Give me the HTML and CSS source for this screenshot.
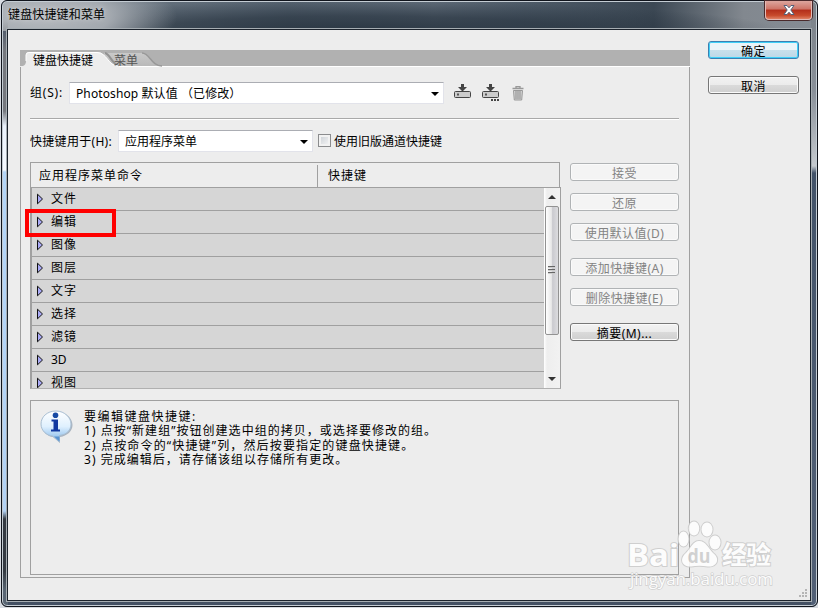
FILE: index.html
```html
<!DOCTYPE html>
<html lang="zh-CN">
<head>
<meta charset="utf-8">
<title>键盘快捷键和菜单</title>
<link rel="stylesheet" href="styles.css">
</head>
<body>
<div class="window">
  <header class="titlebar">
    <span class="title">键盘快捷键和菜单</span>
    <div class="close"><svg width="12" height="10" viewBox="0 0 12 10"><path d="M1 .5h3l2 2.300L8 .5h3L7.800 5 11 9.500H8L6 7.200 4 9.500H1L4.200 5z" fill="#fff" stroke="#53617a" stroke-width="1"/></svg></div>
  </header>
  <main class="client">
    <section class="panel">
      <div class="tabs">
        <svg class="tabshape" width="150" height="17" viewBox="0 0 150 17">
          <defs><linearGradient id="tg" x2="0" y2="1"><stop stop-color="#c9c9c9"/><stop offset="1" stop-color="#b9b9b9"/></linearGradient></defs>
          <path d="M84 3H122C130 3 131 16 142 16H84z" fill="url(#tg)"/>
          <path d="M122 3C130 3 131 16 142 16" fill="none" stroke="#989898" stroke-width="1.500"/>
          <path d="M85 3C90 4 92 14 99 16" fill="none" stroke="#929292" stroke-width="2"/>
          <path d="M0 16H3Q6 15 6 11V5Q6 2 9 2H77C87 2 88 16 99 16V17H0z" fill="#ededed"/>
          <path d="M6 11V5Q6 2.500 9 2.500H77C87 2.500 88 16 98 16" fill="none" stroke="#fff"/>
        </svg>
        <span class="tab active">键盘快捷键</span><span class="tab">菜单</span>
      </div>
      <div class="body">
        <div class="row set">
          <label>组(S):</label>
          <div class="combo wide"><span>Photoshop 默认值 （已修改）</span><i class="down"></i></div>
          <svg class="tool save" width="18" height="18" viewBox="0 0 18 18"><use href="#disk"/></svg>
          <svg class="tool saveas" width="18" height="18" viewBox="0 0 18 18"><g id="disk"><rect x=".5" y="7.500" width="16" height="6" rx="1" fill="#ccc" stroke="#444"/><path d="M3 9.500h2v2H3z" fill="#555"/><path d="M7 0h3v3h3L8.500 7.500 4 3h3z" fill="#444"/></g><path d="M9 15h2v2H9zM12 15h2v2h-2zM15 15h2v2h-2z" fill="#444"/></svg>
          <svg class="tool trash" width="12" height="15" viewBox="0 0 12 15"><path d="M4 2V.5h4V2M.5 2.500h11" fill="none" stroke="#999" stroke-width="1.300"/><path d="M1.500 4.500h9l-.8 9.500H2.300z" fill="#d4d4d4" stroke="#999"/><path d="M4 5v8M6 5v8M8 5v8" stroke="#8d8d8d"/></svg>
        </div>
        <div class="rule"></div>
        <div class="row usage">
          <label>快捷键用于(H):</label>
          <div class="combo"><span>应用程序菜单</span><i class="down"></i></div>
          <i class="check"></i><span class="legacy">使用旧版通道快捷键</span>
        </div>
        <div class="middle">
          <div class="table">
            <div class="thead"><span class="c1">应用程序菜单命令</span><span class="c2">快捷键</span></div>
            <div class="scrollarea">
              <div class="list">
                <div class="item"><svg class="tri" viewBox="0 0 8 12"><use href="#arrow"/></svg>文件</div>
                <div class="item"><svg class="tri" viewBox="0 0 8 12"><use href="#arrow"/></svg>编辑<b class="mark"></b></div>
                <div class="item"><svg class="tri" viewBox="0 0 8 12"><use href="#arrow"/></svg>图像</div>
                <div class="item"><svg class="tri" viewBox="0 0 8 12"><use href="#arrow"/></svg>图层</div>
                <div class="item"><svg class="tri" viewBox="0 0 8 12"><use href="#arrow"/></svg>文字</div>
                <div class="item"><svg class="tri" viewBox="0 0 8 12"><use href="#arrow"/></svg>选择</div>
                <div class="item"><svg class="tri" viewBox="0 0 8 12"><use href="#arrow"/></svg>滤镜</div>
                <div class="item latin"><svg class="tri" viewBox="0 0 8 12"><use href="#arrow"/></svg>3D</div>
                <div class="item last"><svg class="tri" viewBox="0 0 8 12"><path id="arrow" d="M1.500 1.200 6.500 6 1.500 10.800z" fill="#aaaaf8" stroke="#111"/></svg>视图</div>
              </div>
              <div class="scrollbar"><i class="up"></i><div class="thumb"><i></i><i></i><i></i></div><i class="dn"></i></div>
            </div>
          </div>
          <div class="actions">
            <div class="btn off">接受</div>
            <div class="btn off">还原</div>
            <div class="btn off">使用默认值(D)</div>
            <div class="btn off gap">添加快捷键(A)</div>
            <div class="btn off">删除快捷键(E)</div>
            <div class="btn gap">摘要(M)...</div>
          </div>
        </div>
        <div class="info">
          <svg class="infoicon" width="34" height="34" viewBox="0 0 34 34">
            <defs><linearGradient id="ig" x2="0" y2="1"><stop stop-color="#fff"/><stop offset=".5" stop-color="#dff0fe"/><stop offset="1" stop-color="#7db4e8"/></linearGradient></defs>
            <path d="M17 2C7 2 1.500 8 1.500 15S8 26.500 13 27L20 33V27C27 26 32.500 21 32.500 15S27 2 17 2z" fill="#8b9aab" opacity=".7"/>
            <path d="M16 1C7 1 1 7 1 14s6 11.500 11.500 12l7 6V25.500C27 24.500 31 20 31 14S25 1 16 1z" fill="url(#ig)" stroke="#a9bfd3"/>
            <path d="M14 26.500l5.500 5v-5z" fill="#5b93cf"/>
            <circle cx="15.500" cy="5.300" r="2.800" fill="#1649a4"/>
            <path d="M11.500 9.500H18v10h2v2h-9v-2h2.500v-8h-2z" fill="#1138a0"/>
          </svg>
          <div class="lines">
            <p class="l1">要编辑键盘快捷键:</p>
            <p class="l2">1) 点按“新建组”按钮创建选中组的拷贝，或选择要修改的组。</p>
            <p class="l3">2) 点按命令的“快捷键”列，然后按要指定的键盘快捷键。</p>
            <p class="l4">3) 完成编辑后，请存储该组以存储所有更改。</p>
          </div>
        </div>
      </div>
    </section>
    <aside class="side">
      <div class="btn ok">确定</div>
      <div class="btn">取消</div>
    </aside>
    <svg class="grip" width="10" height="10" viewBox="0 0 10 10"><path d="M7 1h2v2H7zM4 4h2v2H4zM7 4h2v2H7zM1 7h2v2H1zM4 7h2v2H4zM7 7h2v2H7z" fill="#b5b5b5"/></svg>
  </main>
  <svg class="watermark" width="160" height="80" viewBox="0 0 160 80">
    <g fill="#fff" stroke="#cbcbcb" stroke-width="2" paint-order="stroke" font-family="Open Sans, sans-serif">
      <text x="5" y="46" font-size="31" font-weight="700" textLength="52" lengthAdjust="spacingAndGlyphs">Bai</text>
      <ellipse cx="61.500" cy="19" rx="5" ry="7.500"/><ellipse cx="72" cy="8.500" rx="5.200" ry="7"/><ellipse cx="85" cy="9.500" rx="5.500" ry="7"/><ellipse cx="93" cy="22.500" rx="5.500" ry="7"/>
      <path d="M77 21C71 21 69 28 64 33C57 39 60 47 69 46.500Q77 45 86 46.500C96 47 98 38 91 33C86 28 84 21 77 21z"/>
      <text x="65.500" y="43" font-size="20" font-weight="700" fill="#cecece" stroke="none" textLength="23" lengthAdjust="spacingAndGlyphs">du</text>
      <text x="100" y="44" font-size="25" font-weight="700" font-family="Noto Sans CJK SC, sans-serif" textLength="49">经验</text>
      <text x="8" y="65" font-size="17" textLength="143" stroke-width="1.400">jingyan.baidu.com</text>
    </g>
  </svg>
</div>
</body>
</html>
```
FILE: styles.css
```css
* { box-sizing: border-box; }
body {
  margin: 0;
  width: 818px;
  height: 608px;
  overflow: hidden;
  background: #d8dce2;
  font: 12px/16px "Noto Sans", "Noto Sans CJK SC", sans-serif;
  color: #000;
}
i, b { display: block; }
label, span, .btn, .item { white-space: nowrap; }
.window {
  position: relative;
  width: 817px;
  height: 607px;
  margin-left: 1px;
  border: 1px solid #10141c;
  border-radius: 6px;
  padding: 0 5px 5px;
  box-shadow: inset 0 0 0 1px #c4ccd3;
  background:
    linear-gradient(transparent 20px, #75787e 50px, #75787e 110px, #eaf2fc 125px, #f5f9ff 169px, #b5d6f8 171px, #b4d3f5 510px, #343a42 518px, #343a42 570px, #596674 590px) 0 0 / 6px 100% no-repeat,
    linear-gradient(#7b8188 0, #899099 90px, #c4c9ce 165px, #435369 172px, #526076 100%) 100% 0 / 6px 100% no-repeat,
    radial-gradient(ellipse 135px 45px at 40px 16px, #b4b8bd 0, rgba(172, 177, 183, .9) 50%, rgba(150, 157, 164, 0) 100%) 0 0 / 100% 30px no-repeat,
    radial-gradient(ellipse 420px 30px at 360px 30px, rgba(35, 47, 59, .85) 0, rgba(35, 47, 59, .6) 50%, rgba(35, 47, 59, 0) 100%) 0 0 / 100% 30px no-repeat,
    linear-gradient(90deg, #8b9299 0, #65717d 16%, #55626f 35%, #5e6a77 53%, #4c5966 65%, #3c4854 80%, #82888f 91%, #858c95 100%) 0 0 / 100% 30px no-repeat,
    #435063;
}
.titlebar { display: flex; justify-content: space-between; height: 28px; }
.title { padding: 6px 0 0 1px; letter-spacing: .15px; text-shadow: 0 0 5px #ddd; }
.close {
  display: flex; align-items: center; justify-content: center;
  width: 47px; height: 19px;
  border: 1px solid #e4bbb7;
  border-top: 0;
  border-radius: 0 0 4px 4px;
  box-shadow: 0 0 0 1px #4a2a2c;
  background: linear-gradient(#dda69e 0, #cd7366 45%, #b32e1b 50%, #c74a2c 80%, #df8165 100%);
}
.client {
  position: relative;
  display: flex;
  gap: 18px;
  width: 804px;
  height: 572px;
  padding: 11px 0 0 12px;
  border: 1px solid #1c232c;
  background: #ededed;
  outline: 1px solid #a6adb2;
}
.panel { width: 670px; height: 528px; margin-top: 9px; }
.tabs { position: relative; display: flex; height: 17px; background: #b1b1b1; border-bottom: 1px solid #fff; }
.tabshape { position: absolute; left: 0; top: 0; }
.tab { position: relative; margin-top: 3px; width: 81px; height: 14px; color: #555; }
.tab.active { margin-left: 13px; color: #000; }
.body { height: 511px; padding: 15px 10px 0 9px; border: 1px solid #a0a0a0; border-top: 0; }
.row { display: flex; height: 22px; }
.row label { margin-top: 3px; }
.set label { width: 39px; letter-spacing: .8px; }
.usage label { width: 88px; letter-spacing: .3px; margin-top: 4px; }
.combo {
  display: flex; justify-content: space-between;
  width: 195px; height: 22px;
  padding: 3px 4px 0 6px;
  background: #fff;
  border: 1px solid #e2e3ea;
  border-top-color: #abadb3;
}
.combo.wide { width: 375px; letter-spacing: .1px; }
.down { margin-top: 6px; width: 0; height: 0; border: 4px solid transparent; border-top-color: #000; border-bottom: 0; }
.save { margin: 2px 0 0 10px; }
.saveas { margin: 2px 0 0 10px; }
.trash { margin: 4px 0 0 12px; }
.rule { height: 2px; margin: 14px 0 10px; background: #fff; border-top: 1px solid #a9a9a9; }
.check {
  width: 13px; height: 13px; margin: 4px 3px 0 5px;
  border: 1px solid #8b8c8e;
  background: linear-gradient(135deg, #c8cdd3, #f8f8f8);
  box-shadow: inset 0 0 0 2px #f2f2f2;
}
.legacy { margin-top: 4px; }
.middle { display: flex; gap: 10px; margin-top: 10px; height: 227px; }
.table { width: 530px; height: 227px; }
.thead { display: flex; height: 25px; border: 1px solid #a0a0a0; border-bottom: 0; letter-spacing: 1px; }
.c1 { width: 287px; padding: 3px 0 0 8px; margin-top: 2px; border-right: 1px solid #a0a0a0; line-height: 15px; }
.c2 { padding: 5px 0 0 10px; line-height: 15px; }
.scrollarea { display: flex; width: 531px; height: 202px; border: 1px solid #a0a0a0; border-bottom-color: #b0b0b0; }
.list { width: 513px; height: 200px; background: #d6d6d6; border-left: 1px solid #a0a0a0; }
.item { position: relative; display: flex; align-items: center; height: 23px; padding-left: 4px; border-bottom: 1px solid #a0a0a0; letter-spacing: 1px; }
.item.last { height: 16px; padding-top: 5px; overflow: hidden; border: 0; }
.item.latin { letter-spacing: 0; }
.tri { width: 8px; height: 12px; margin-right: 7px; }
.mark { position: absolute; left: -7px; top: -2px; width: 91px; height: 28px; border: 4px solid #f00; }
.scrollbar { display: flex; flex-direction: column; align-items: center; width: 16px; height: 200px; background: linear-gradient(90deg, #fff, #eee 3px, #f2f2f2); }
.up { margin-top: 7px; border: 4px solid transparent; border-top: 0; border-bottom-color: #333; }
.thumb {
  display: flex; flex-direction: column; align-items: center; justify-content: center; gap: 1px;
  width: 14px; height: 129px; margin-top: 7px; padding: 0 2px 2px 0;
  border: 1px solid #929292;
  border-radius: 2px;
  background: linear-gradient(90deg, #fff, #e8e8e8 45%, #cacacf 55%, #dcdcdf);
}
.thumb i { width: 7px; height: 2px; background: #666; border-bottom: 1px solid #ccc; }
.dn { margin-top: 42px; border: 4px solid transparent; border-bottom: 0; border-top-color: #333; }
.actions { display: flex; flex-direction: column; gap: 12px; padding-top: 1px; }
.btn {
  width: 109px; height: 18px;
  border: 1px solid #777;
  border-radius: 3px;
  box-shadow: inset 0 0 0 1px #fafafa;
  background: linear-gradient(#f2f2f2 0, #ebebeb 50%, #dadada 51%, #cfcfcf 100%);
  text-align: center;
  letter-spacing: .45px;
  line-height: 19px;
}
.btn.off { background: #f4f4f4; border-color: #b0b3b5; color: #838383; }
.btn.gap { margin-top: 5px; }
.info { display: flex; width: 649px; height: 175px; margin-top: 11px; padding: 9px 0 0 9px; border: 1px solid #a0a0a0; }
.lines { margin-left: 10px; }
.lines p { margin: 0; height: 14.4px; line-height: 14.4px; white-space: nowrap; letter-spacing: 1.03px; }
.lines .l1 { letter-spacing: 1.5px; }
.lines .l3 { letter-spacing: 1.15px; }
.side { display: flex; flex-direction: column; gap: 17px; width: 91px; }
.side .btn { width: 91px; height: 18px; }
.side .ok { border-color: #3c7fb1; box-shadow: inset 0 0 0 1px #3fd0f8; background: linear-gradient(#eaf4f9 50%, #c9e0ec 51%, #bdd8e7); }
.grip { position: absolute; right: 2px; bottom: 2px; }
.watermark { position: absolute; left: 620px; top: 519px; opacity: .88; overflow: visible; }
```
